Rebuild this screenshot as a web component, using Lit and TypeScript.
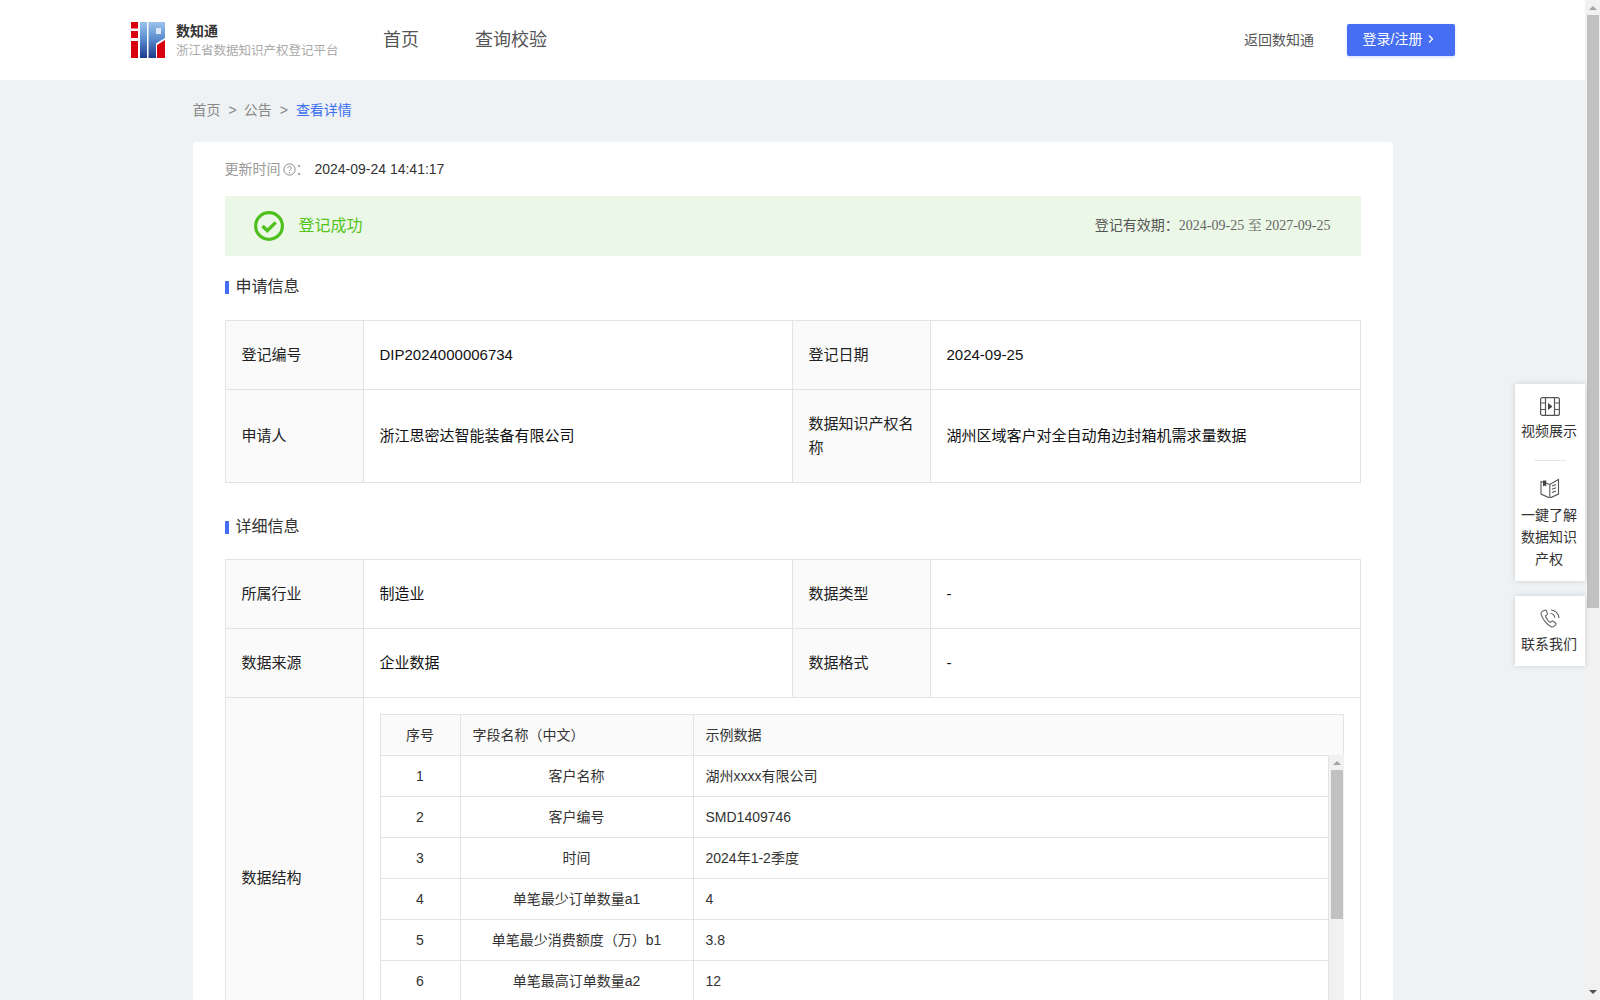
import { LitElement, html, css } from "lit";
import { customElement } from "lit/decorators.js";

const ROWS: [string, string, string][] = [
  ["1", "客户名称", "湖州xxxx有限公司"],
  ["2", "客户编号", "SMD1409746"],
  ["3", "时间", "2024年1-2季度"],
  ["4", "单笔最少订单数量a1", "4"],
  ["5", "单笔最少消费额度（万）b1", "3.8"],
  ["6", "单笔最高订单数量a2", "12"],
];

@customElement("app-root")
export class AppRoot extends LitElement {
  static styles = css`
    :host {
      display: flex;
      width: 100%;
      height: 100vh;
      overflow: hidden;
      position: relative;
      background: #eff2f5;
      color: #333;
      font-family: "Liberation Sans", "Noto Sans CJK SC", sans-serif;
      font-size: 14px;
    }
    .page { flex: 1; min-width: 0; height: 100vh; overflow: hidden; }
    .header { height: 80px; background: #fff; display: flex; align-items: center; padding: 0 130px 0 131px; }
    .logo { width: 34px; height: 36px; display: block; }
    .brand { margin: 2px 0 0 11px; width: 207px; }
    .brand-name { font-size: 14px; font-weight: 700; line-height: 20px; color: #333; }
    .brand-sub { font-size: 12.5px; line-height: 20px; color: #aaa; white-space: nowrap; }
    .nav { display: flex; gap: 56px; font-size: 18px; color: #555; flex: 1; padding-bottom: 4px; }
    .back { color: #555; font-size: 14px; margin-right: 33px; padding-bottom: 2px; }
    .login {
      width: 108px; height: 32px; box-sizing: border-box; display: flex; align-items: center; justify-content: center; gap: 5px;
      background: #456ef2; color: #fff; border-radius: 2px; font-size: 14px; padding: 0 4px 4px 0;
      box-shadow: 0 1px 3px rgba(69, 110, 242, 0.25);
    }
    .login svg { display: block; margin-top: 2px; }
    .container { width: 1200px; margin: 0 auto; }
    .crumbs { display: flex; padding: 20px 0 21px; line-height: 21px; color: #888; }
    .crumbs .sep { margin: 0 8px; }
    .crumbs .sep.b { margin-right: 9px; }
    .crumbs .pull { margin-left: -1px; }
    .crumbs .cur { color: #3a6ff0; }
    .card { background: #fff; border-radius: 4px 4px 0 0; padding: 16px 32px 32px; }
    .updated { display: flex; align-items: center; line-height: 22px; color: #999; }
    .updated svg { margin: 0 0 0 2px; display: block; }
    .updated .time { color: #333; margin-left: 1px; }
    .banner {
      margin-top: 16px; height: 60px; background: #ebf7e7; display: flex; align-items: center;
      padding: 0 30px 0 29px;
    }
    .banner svg { display: block; }
    .banner .ok { margin-left: 15px; font-size: 16px; color: #52c41a; flex: 1; padding-bottom: 4px; }
    .validity { color: #555; font-size: 14px; padding-bottom: 5px; }
    .validity .serif { font-family: "Liberation Serif", "Noto Serif CJK SC", "Noto Sans CJK SC", serif; color: #666; }
    .title { display: flex; align-items: center; font-size: 16px; line-height: 24px; color: #333; }
    .title i { width: 4px; height: 13px; background: #456ef2; margin: 1px 7px 0 0; }
    .t1 { margin-top: 19px; }
    .t2 { margin-top: 32px; }
    table { border-collapse: collapse; table-layout: fixed; }
    .info { width: 1135px; margin-top: 21px; font-size: 15px; }
    .info td { border: 1px solid #e3e3e3; padding: 22px 16px; line-height: 24px; color: #111; vertical-align: middle; }
    .info td.label { background: #fafafa; color: #222; }
    .info td.struct { padding: 16px; font-size: 14px; }
    .info.second { margin-top: 20px; }
    .inner { width: 964px; }
    .inner table { width: 100%; }
    .inner th, .info .inner td {
      border: 1px solid #e3e3e3; height: 41px; padding: 0 11px 0 12px; font-weight: 400; color: #333;
      line-height: 20px; text-align: left; box-sizing: border-box; font-size: 14px;
    }
    .inner th { background: #fafafa; border-bottom: none; height: 40px; }
    .inner th.c, .info .inner td.c { text-align: center; padding: 0 11px; }
    .inner-body { display: flex; height: 288px; overflow: hidden; }
    .inner-body table { width: 949px; flex: none; align-self: flex-start; }
    .sb { position: relative; background: #f1f1f1; flex: 1; }
    .sb .thumb { position: absolute; background: #c1c1c1; }
    .sb .up, .sb .down { position: absolute; width: 0; height: 0; border-left: 4px solid transparent; border-right: 4px solid transparent; }
    .sb .up { border-bottom: 4px solid #a3a3a3; }
    .sb .down { border-top: 4px solid #505050; }
    .in-sb .thumb { left: 2px; right: 1px; top: 15px; height: 149px; }
    .in-sb .up { left: 4px; top: 6px; }
    .pg-sb { flex: none; width: 15px; height: 100vh; }
    .pg-sb .thumb { left: 2px; right: 1px; top: 15px; height: 593px; }
    .pg-sb .up { left: 4px; top: 6px; }
    .pg-sb .down { left: 4px; bottom: 6px; }
    .side { position: absolute; left: 1515px; top: 384px; width: 70px; display: flex; flex-direction: column; gap: 15px; }
    .panel {
      background: #fff; box-shadow: 0 0 6px rgba(0, 0, 0, 0.14); text-align: center; padding: 13px 0 11px;
      line-height: 22px; color: #333;
    }
    .panel svg { display: block; margin: 0 auto; }
    .panel hr { border: 0; border-top: 1px solid #e5e5e5; width: 32px; margin: 18px auto 17px; }
    .panel .txt { padding: 0 6px 0 4px; }
    .panel .video { margin-bottom: 4px; }
    .panel .book { margin-bottom: 6px; }
    .panel .phone { margin-bottom: 5px; }
  `;

  render() {
    return html`
      <div class="page">
        <div class="header">
          <svg class="logo" viewBox="0 0 34 36">
            <defs>
              <linearGradient id="lg" x1="0" y1="0" x2="0" y2="1">
                <stop offset="0" stop-color="#9cc3ee" />
                <stop offset="0.45" stop-color="#5c8fd0" />
                <stop offset="1" stop-color="#1d3a8c" />
              </linearGradient>
            </defs>
            <path fill="#d8000f" d="M0 0h7v6.5H0zM0 9h7v7H0zM0 19h7v17H0z" />
            <rect x="9" y="0" width="7" height="36" fill="url(#lg)" />
            <path fill="url(#lg)" d="M17.5 0H34v16l-9 5.5V36h-7.5z" />
            <path fill="#dce8f7" d="M25 6h5v6h-5z" />
            <path fill="#d8000f" d="M26 23l8-5v18h-8z" />
          </svg>
          <div class="brand">
            <div class="brand-name">数知通</div>
            <div class="brand-sub">浙江省数据知识产权登记平台</div>
          </div>
          <div class="nav"><span>首页</span><span>查询校验</span></div>
          <span class="back">返回数知通</span>
          <div class="login">
            <span>登录/注册</span>
            <svg width="8" height="12" viewBox="0 0 8 12"><path d="M2 2.5l3.5 3.5L2 9.5" fill="none" stroke="#fff" stroke-width="1.3" /></svg>
          </div>
        </div>
        <div class="container">
          <div class="crumbs">
            <span>首页</span><span class="sep">&gt;</span><span class="pull">公告</span><span class="sep b">&gt;</span><span class="cur pull">查看详情</span>
          </div>
          <div class="card">
            <div class="updated">
              <span>更新时间</span>
              <svg width="13" height="13" viewBox="0 0 13 13">
                <circle cx="6.5" cy="6.5" r="5.6" fill="none" stroke="#888" />
                <path d="M4.8 5.2a1.7 1.7 0 1 1 2.6 1.4c-.6.4-.9.7-.9 1.3" fill="none" stroke="#888" />
                <circle cx="6.5" cy="9.7" r=".7" fill="#888" />
              </svg>
              <span>：</span><span class="time">&nbsp;2024-09-24 14:41:17</span>
            </div>
            <div class="banner">
              <svg width="30" height="30" viewBox="0 0 30 30">
                <circle cx="15" cy="15" r="13.4" fill="none" stroke="#4ec01e" stroke-width="3.2" />
                <path d="M8.5 15l4.8 4.6 8.4-8.2" fill="none" stroke="#4ec01e" stroke-width="3.4" />
              </svg>
              <span class="ok">登记成功</span>
              <span class="validity">登记有效期：<span class="serif">2024-09-25 至 2027-09-25</span></span>
            </div>
            <div class="title t1"><i></i>申请信息</div>
            <table class="info">
              <colgroup><col width="138" /><col width="429" /><col width="138" /><col width="430" /></colgroup>
              <tr>
                <td class="label">登记编号</td><td>DIP2024000006734</td>
                <td class="label">登记日期</td><td>2024-09-25</td>
              </tr>
              <tr>
                <td class="label">申请人</td><td>浙江思密达智能装备有限公司</td>
                <td class="label">数据知识产权名称</td><td>湖州区域客户对全自动角边封箱机需求量数据</td>
              </tr>
            </table>
            <div class="title t2"><i></i>详细信息</div>
            <table class="info second">
              <colgroup><col width="138" /><col width="429" /><col width="138" /><col width="430" /></colgroup>
              <tr>
                <td class="label">所属行业</td><td>制造业</td>
                <td class="label">数据类型</td><td>-</td>
              </tr>
              <tr>
                <td class="label">数据来源</td><td>企业数据</td>
                <td class="label">数据格式</td><td>-</td>
              </tr>
              <tr>
                <td class="label">数据结构</td>
                <td class="struct" colspan="3">
                  <div class="inner">
                    <table>
                      <colgroup><col width="80" /><col width="233" /><col /></colgroup>
                      <tr><th class="c">序号</th><th>字段名称（中文）</th><th>示例数据</th></tr>
                    </table>
                    <div class="inner-body">
                      <table>
                        <colgroup><col width="80" /><col width="233" /><col /></colgroup>
                        ${ROWS.map(
                          (r) => html`<tr><td class="c">${r[0]}</td><td class="c">${r[1]}</td><td>${r[2]}</td></tr>`
                        )}
                      </table>
                      <div class="sb in-sb"><div class="up"></div><div class="thumb"></div></div>
                    </div>
                  </div>
                </td>
              </tr>
            </table>
          </div>
        </div>
      </div>
      <div class="sb pg-sb"><div class="up"></div><div class="thumb"></div><div class="down"></div></div>
      <div class="side">
        <div class="panel">
          <svg class="video" width="20" height="19" viewBox="0 0 20 19" fill="none" stroke="#555" stroke-width="1.2">
            <rect x=".6" y=".6" width="18.8" height="17.8" rx="2" />
            <path d="M5.5 .6v17.8M14.5 .6v17.8M.6 6h4.9M.6 12.5h4.9M14.5 6h4.9M14.5 12.5h4.9" />
            <path d="M8 6l4.5 3.5L8 13z" fill="#444" stroke="none" />
          </svg>
          <div class="txt">视频展示</div>
          <hr />
          <svg class="book" width="20" height="20" viewBox="0 0 20 20" fill="none" stroke="#555" stroke-width="1.1">
            <path d="M1 3.5l8.8 3 8.7-5v14.6l-8.7 4-8.8-4z" />
            <path d="M9.8 6.5v13" />
            <path d="M3 2.5h3.2v6L4.6 7.4 3 8.5z" fill="#444" stroke="none" />
            <path d="M12 8l4-1.6M12 11.3l4-1.6M12 14.6l4-1.6" />
          </svg>
          <div class="txt">一鍵了解数据知识产权</div>
        </div>
        <div class="panel">
          <svg class="phone" width="20" height="19" viewBox="0 0 20 19" fill="none" stroke="#666" stroke-width="1.1">
            <path d="M4.8 1.2L2 2.6C1 3.2.8 4.2 1.2 5.6c1.2 4.4 5.4 9.8 9.6 12 1.2.6 2.4.6 3.2-.2l1.8-1.8c.4-.5.4-1 0-1.4l-2.6-2c-.5-.4-1-.4-1.4 0l-1.3 1.2c-2.2-1.2-4.2-4-5-6.6l1.4-.9c.5-.4.6-.9.4-1.5L6.4 1.6c-.3-.5-1-.7-1.6-.4z" />
            <path d="M10.5 4.5c2.4.2 4 1.8 4.3 4.3M11 1c4.2.3 7.6 3.6 8 8" />
          </svg>
          <div class="txt">联系我们</div>
        </div>
      </div>
    `;
  }
}
